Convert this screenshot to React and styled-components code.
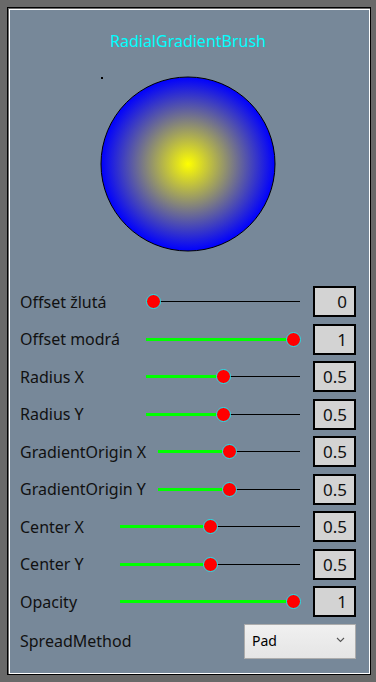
import React from 'react';
import styled, { createGlobalStyle } from 'styled-components';

const rows = [
  { label: 'Offset žlutá', value: 0, labelWidth: 126 },
  { label: 'Offset modrá', value: 1, labelWidth: 126 },
  { label: 'Radius X', value: 0.5, labelWidth: 126 },
  { label: 'Radius Y', value: 0.5, labelWidth: 126 },
  { label: 'GradientOrigin X', value: 0.5, labelWidth: 138 },
  { label: 'GradientOrigin Y', value: 0.5, labelWidth: 138 },
  { label: 'Center X', value: 0.5, labelWidth: 100 },
  { label: 'Center Y', value: 0.5, labelWidth: 100 },
  { label: 'Opacity', value: 1, labelWidth: 100 },
];

function Slider({ value }) {
  // thumb sits 7px in from each end of the track
  const pos = `calc(7px + (100% - 14px) * ${value})`;
  return (
    <Track>
      <Line />
      <Fill style={{ width: pos }} />
      <Thumb style={{ left: pos }} />
    </Track>
  );
}

export default function App() {
  return (
    <>
      <GlobalStyle />
      <Panel>
        <Title>RadialGradientBrush</Title>
        <Preview>
          <svg width="178" height="178" viewBox="0 0 178 178">
            <defs>
              <radialGradient id="brush" cx="0.5" cy="0.5" r="0.5">
                <stop offset="0" stopColor="#ffff00" />
                <stop offset="1" stopColor="#0000ff" />
              </radialGradient>
            </defs>
            <rect x="2" y="2" width="2" height="2" fill="#000" />
            <circle cx="89" cy="89" r="87" fill="url(#brush)" stroke="#000" strokeWidth="1" />
          </svg>
        </Preview>
        <Rows>
          {rows.map((r) => (
            <Row key={r.label} $labelWidth={r.labelWidth}>
              <Label>{r.label}</Label>
              <Slider value={r.value} />
              <ValueBox>{r.value}</ValueBox>
            </Row>
          ))}
          <SelectRow>
            <Label>SpreadMethod</Label>
            <Select>
              <span>Pad</span>
              <svg width="9" height="6" viewBox="0 0 9 6">
                <path d="M1 1 L4.5 4.5 L8 1" fill="none" stroke="#555" strokeWidth="1.1" />
              </svg>
            </Select>
          </SelectRow>
        </Rows>
      </Panel>
    </>
  );
}

const GlobalStyle = createGlobalStyle`
  html, body {
    margin: 0;
    background: #696969;
  }
  body {
    padding: 7px;
    font-family: "Noto Sans", "Open Sans", sans-serif;
  }
`;

const Panel = styled.div`
  box-sizing: border-box;
  width: 364px;
  height: 668px;
  border: 1px solid #000;
  background: #778899;
  box-shadow: inset 1px 1px 0 #696969, inset 2px 2px 0 #fff, inset -1px -1px 0 #fff;
  padding: 22px 14px 0 12px;
  display: flex;
  flex-direction: column;
`;

const Title = styled.div`
  text-align: center;
  color: #00ffff;
  font-size: 16px;
  line-height: 22px;
`;

const Preview = styled.div`
  display: flex;
  justify-content: center;
  margin-top: 23px;
`;

const Rows = styled.div`
  display: flex;
  flex-direction: column;
  gap: 6.5px;
  margin-top: 33px;
`;

const Row = styled.div`
  display: grid;
  grid-template-columns: ${(p) => p.$labelWidth}px 1fr 56px;
  align-items: center;
  height: 31px;
`;

const Label = styled.div`
  color: #111;
  font-size: 16px;
  white-space: nowrap;
`;

const Track = styled.div`
  position: relative;
  height: 31px;
`;

const Line = styled.div`
  position: absolute;
  left: 0;
  right: 0;
  top: 15px;
  height: 1px;
  background: #000;
`;

const Fill = styled.div`
  position: absolute;
  left: 0;
  top: 14px;
  height: 3px;
  background: #00ff00;
`;

const Thumb = styled.div`
  position: absolute;
  top: 8px;
  width: 15px;
  height: 15px;
  margin-left: -7.5px;
  box-sizing: border-box;
  border-radius: 50%;
  border: 1px solid #1ee6f0;
  background: #ff0000;
`;

const ValueBox = styled.div`
  box-sizing: border-box;
  margin-left: 13px;
  height: 31px;
  border: 2px solid #000;
  background: #d3d3d3;
  color: #111;
  font-size: 17px;
  line-height: 27px;
  text-align: right;
  padding-right: 7px;
`;

const SelectRow = styled.div`
  display: flex;
  justify-content: space-between;
  align-items: center;
  height: 35px;
`;

const Select = styled.div`
  box-sizing: border-box;
  width: 112px;
  height: 35px;
  border: 1px solid #acacac;
  background: linear-gradient(#f0f0f0, #e5e5e5);
  display: flex;
  align-items: center;
  justify-content: space-between;
  padding: 0 10px 2px 7px;
  font-size: 14px;
  color: #000;
`;
